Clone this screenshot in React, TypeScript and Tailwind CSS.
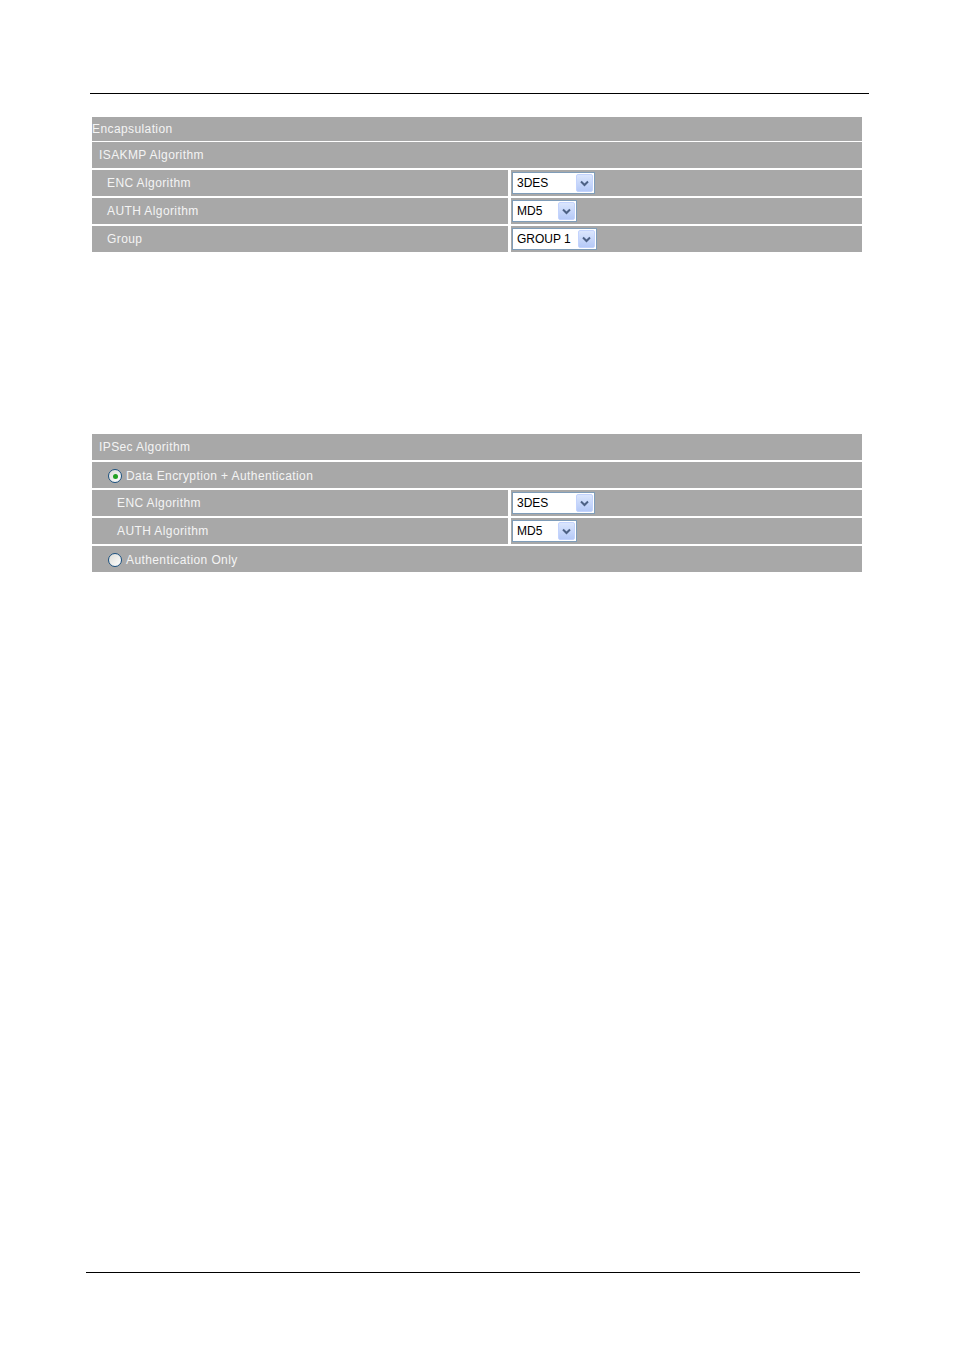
import React from "react";

const FONT = { fontFamily: '"Liberation Sans", Arial, sans-serif' };

function Select({ value, width }: { value: string; width: string }) {
  return (
    <div
      className={
        "flex h-[22px] items-center border border-[#7f9db9] bg-white pl-[4px] pr-[1px] " + width
      }
    >
      <span className="flex-1 text-[12px] leading-none text-black">{value}</span>
      <span className="flex h-[18px] w-[17px] items-center justify-center rounded-[2px] border border-[#c3d3fd] bg-gradient-to-b from-[#dbe6fd] to-[#b5c9f7]">
        <svg width="9" height="7" viewBox="0 0 9 7">
          <path d="M1 1.5 L4.5 5 L8 1.5" fill="none" stroke="#4d6185" strokeWidth="2" />
        </svg>
      </span>
    </div>
  );
}

function Radio({ checked }: { checked?: boolean }) {
  return (
    <span className="flex h-[14px] w-[14px] items-center justify-center rounded-full border border-[#1c5180] bg-gradient-to-br from-[#dcdcd7] to-white">
      {checked && <span className="h-[5px] w-[5px] rounded-full bg-[#21a121]" />}
    </span>
  );
}

function Row({
  label,
  pad,
  h = "h-[26px]",
  value,
}: {
  label: React.ReactNode;
  pad: string;
  h?: string;
  value?: React.ReactNode;
}) {
  const text = "bg-[#a8a8a8] text-[12px] tracking-[0.4px] text-[#f4f4f4] ";
  if (!value) {
    return <div className={"flex items-center " + text + h + " " + pad}>{label}</div>;
  }
  return (
    <div className={"flex gap-[3px] " + h}>
      <div className={"flex w-[416px] items-center " + text + pad}>{label}</div>
      <div className="flex flex-1 items-center bg-[#a8a8a8] pl-[1px]">{value}</div>
    </div>
  );
}

export default function App() {
  return (
    <div className="relative h-[1350px] w-[954px] bg-white" style={FONT}>
      <div className="pt-[93px]">
        <div className="ml-[90px] h-px w-[779px] bg-black" />

        {/* Encapsulation / ISAKMP */}
        <div className="ml-[92px] mt-[23px] flex w-[770px] flex-col">
          <Row label="Encapsulation" pad="pl-0" h="h-[24px]" />
          <div className="mt-[1px] flex flex-col gap-[2px]">
            <Row label="ISAKMP Algorithm" pad="pl-[7px]" />
            <Row label="ENC Algorithm" pad="pl-[15px]" value={<Select value="3DES" width="w-[83px]" />} />
            <Row label="AUTH Algorithm" pad="pl-[15px]" value={<Select value="MD5" width="w-[65px]" />} />
            <Row label="Group" pad="pl-[15px]" value={<Select value="GROUP 1" width="w-[85px]" />} />
          </div>
        </div>

        {/* IPSec */}
        <div className="ml-[92px] mt-[182px] flex w-[770px] flex-col gap-[2px]">
          <Row label="IPSec Algorithm" pad="pl-[7px]" />
          <Row
            label={
              <span className="flex items-center gap-[4px] pt-[2px]">
                <Radio checked />
                Data Encryption + Authentication
              </span>
            }
            pad="pl-[16px]"
          />
          <Row label="ENC Algorithm" pad="pl-[25px]" value={<Select value="3DES" width="w-[83px]" />} />
          <Row label="AUTH Algorithm" pad="pl-[25px]" value={<Select value="MD5" width="w-[65px]" />} />
          <Row
            label={
              <span className="flex items-center gap-[4px] pt-[2px]">
                <Radio />
                Authentication Only
              </span>
            }
            pad="pl-[16px]"
          />
        </div>

        <div className="ml-[86px] mt-[700px] h-px w-[774px] bg-black" />
      </div>
    </div>
  );
}
